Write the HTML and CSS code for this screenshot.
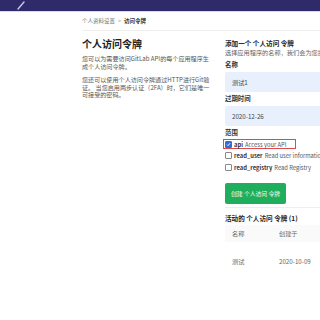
FILE: index.html
```html
<!DOCTYPE html>
<html lang="zh">
<head>
  <meta charset="UTF-8">
  <title>个人访问令牌</title>
  <link rel="stylesheet" href="styles.css">
</head>
<body>
  <div class="topbar">
    <svg class="logo" width="8" height="9" viewBox="0 0 8 9">
      <path d="M1 8 L7 1" stroke="#c9c6ea" stroke-width="1.4" stroke-linecap="round"/>
    </svg>
  </div>

  <div class="page">
    <div class="crumbs">
      <span>个人资料设置</span>
      <span class="sep">&gt;</span>
      <b>访问令牌</b>
    </div>

    <div class="row">
      <div class="left">
        <h2>个人访问令牌</h2>
        <p>您可以为需要访问GitLab API的每个应用程序生成个人访问令牌。</p>
        <p>您还可以使用个人访问令牌通过HTTP进行Git验证。 当您启用两步认证（2FA）时，它们是唯一可接受的密码。</p>
      </div>

      <div class="right">
        <h4>添加一个 个人访问 令牌</h4>
        <div class="hint">选择应用程序的名称，我们会为您提供唯一的个人访问令牌。</div>

        <label class="lbl">名称</label>
        <div class="input">测试1</div>

        <label class="lbl">过期时间</label>
        <div class="input">2020-12-26</div>

        <label class="lbl">范围</label>
        <div class="scope marked">
          <span class="box checked">
            <svg width="5" height="5" viewBox="0 0 5 5"><path d="M1 2.6 L2.1 3.7 L4 1.2" stroke="#fff" stroke-width="0.9" fill="none"/></svg>
          </span>
          <b>api</b> Access your API
        </div>
        <div class="scope"><span class="box"></span><b>read_user</b> Read user information</div>
        <div class="scope"><span class="box"></span><b>read_registry</b> Read Registry</div>

        <button class="create">创建 个人访问 令牌</button>

        <div class="active">
          <h4>活动的 个人访问 令牌 (1)</h4>
          <div class="thead">
            <span class="c1">名称</span>
            <span>创建于</span>
          </div>
          <div class="trow">
            <span class="c1">测试</span>
            <span>2020-10-09</span>
          </div>
        </div>
      </div>
    </div>
  </div>
</body>
</html>
```

FILE: styles.css
```css
html, body {
  margin: 0;
  padding: 0;
  width: 320px;
  height: 320px;
  overflow: hidden;
  background-color: #fff;
  font-family: "Noto Sans CJK SC", "Noto Sans", sans-serif;
  color: #2e2e2e;
}

.topbar {
  height: 11px;
  background-color: #2f2b6b;
  border-bottom: 1px solid #d9d7ee;
  display: flex;
  align-items: center;
  padding-left: 17px;
}

.page {
  padding-left: 82px;
}

.crumbs {
  height: 18px;
  display: flex;
  align-items: center;
  gap: 3px;
  font-size: 5.5px;
  color: #777;
  border-bottom: 1px solid #eee;
}

.crumbs .sep {
  color: #aaa;
}

.crumbs b {
  color: #333;
}

.row {
  display: flex;
  gap: 13px;
  width: 300px;
}

.left {
  width: 130px;
  flex-shrink: 0;
}

.left h2 {
  font-size: 10px;
  margin: 6px 0 5px;
  line-height: 13px;
  color: #222;
}

.left p {
  font-size: 6.1px;
  line-height: 7.6px;
  color: #555;
  margin: 0 0 6px;
}

.right {
  width: 200px;
  flex-shrink: 0;
  font-size: 6.2px;
}

.right h4 {
  font-size: 6.6px;
  margin: 8px 0 0;
  line-height: 9px;
  color: #222;
}

.hint {
  color: #666;
  white-space: nowrap;
  line-height: 9px;
  margin-bottom: 3px;
}

.lbl {
  display: block;
  font-weight: bold;
  font-size: 6.4px;
  line-height: 10px;
  color: #333;
  margin-top: 1px;
}

.input {
  height: 20px;
  background-color: #e8f0fe;
  border-radius: 2px;
  display: flex;
  align-items: center;
  padding-left: 7px;
  margin: 2px 0 2px;
  color: #444;
}

.scope {
  display: flex;
  align-items: center;
  gap: 2px;
  height: 10px;
  margin-bottom: 1.5px;
  color: #555;
  font-size: 5.8px;
  white-space: nowrap;
}

.scope b {
  color: #333;
}

.scope.marked {
  width: 70px;
  border: 1px solid #e0484c;
  margin-left: -2px;
  padding-left: 1px;
  height: 8px;
  margin-top: 1px;
}

.box {
  width: 5px;
  height: 5px;
  border: 0.7px solid #888;
  border-radius: 1px;
  display: flex;
  align-items: center;
  justify-content: center;
  background: #fff;
}

.box.checked {
  background-color: #2e6fd3;
  border-color: #2e6fd3;
}

.create {
  margin-top: 9px;
  width: 61px;
  height: 21px;
  border: none;
  border-radius: 2px;
  background-color: #1fae5b;
  color: #fff;
  font-family: inherit;
  font-size: 5.8px;
  padding: 0;
}

.active {
  margin-top: 3px;
  border-top: 1px solid #eee;
}

.active h4 {
  margin-top: 6px;
}

.thead, .trow {
  display: flex;
  align-items: center;
  color: #666;
}

.thead {
  height: 17px;
  background-color: #fafafa;
  margin-top: 2px;
}

.trow {
  height: 24px;
  margin-top: 8px;
}

.c1 {
  width: 47px;
  padding-left: 7px;
}
```
